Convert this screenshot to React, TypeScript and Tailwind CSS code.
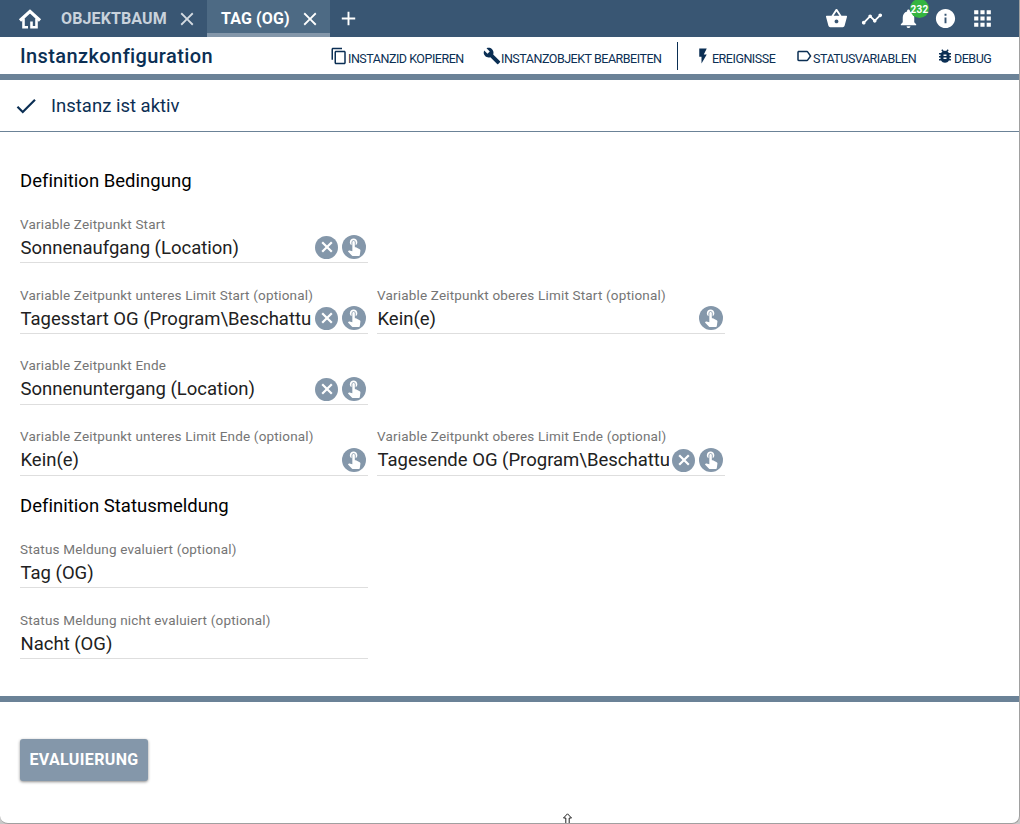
import React from "react";
import { MdAdd, MdApps, MdBugReport, MdBuild, MdCheck, MdClose, MdContentCopy, MdFlashOn, MdInfo, MdLabelOutline, MdNotifications, MdShoppingBasket, MdTimeline, MdTouchApp } from "react-icons/md";

function HomeIcon() {
  return (
    <svg viewBox="0 0 24 20" className="h-5 w-6" fill="none" stroke="white">
      <path d="M2 11.5 12 2.3l10 9.2" strokeWidth="3.2" />
      <path d="M5.5 9.5v8.7H10M18.5 9.5v8.7h-5v-5.7" strokeWidth="2.6" />
    </svg>
  );
}

type FieldProps = { label: string; value: string; clear?: boolean; pick?: boolean; labelClass?: string; valueClass?: string };

function Field({ label, value, clear, pick, labelClass = "pt-0", valueClass = "pt-0.5" }: FieldProps) {
  return (
    <div className="flex h-[71px] w-[348px] shrink-0 flex-col border-b border-[#dedede] pt-6">
      <div className={"h-4 text-[13.5px] leading-4 tracking-[0.175px] whitespace-nowrap text-[#757575] " + labelClass}>{label}</div>
      <div className="flex h-[30px] items-center gap-1 pr-0.5">
        <div className={"h-[30px] min-w-0 flex-1 overflow-hidden pl-[0.5px] text-[18.5px] leading-[29px] whitespace-nowrap text-[#212121] " + valueClass}>{value}</div>
        {clear && (
          <button className="-ml-px flex size-[23px] shrink-0 items-center justify-center rounded-full bg-[#8497aa] text-white">
            <svg viewBox="0 0 12 12" className="size-3" fill="none" stroke="currentColor" strokeWidth="2.2">
              <path d="m1.2 1.2 9.6 9.6m0-9.6-9.6 9.6" />
            </svg>
          </button>
        )}
        {pick && (
          <button className="flex size-6 shrink-0 items-center justify-center rounded-full bg-[#8497aa] text-white">
            <MdTouchApp className="mb-0.5 size-5" />
          </button>
        )}
      </div>
    </div>
  );
}

const actionText = "pt-1 text-[12.5px] leading-4 font-normal tracking-[-0.48px]";

export default function App() {
  return (
    <div className="h-[824px] w-[1020px] overflow-hidden bg-[#c9c9c9] font-['Roboto',sans-serif]">
      <div className="flex h-[824px] w-[1020px] flex-col overflow-hidden rounded-b-[8px] border-r border-b border-[#a0a0a0] bg-white">
        <header className="flex h-[37px] shrink-0 items-center bg-[#395673] text-white">
          <div className="flex w-[61px] pl-[18px]"><HomeIcon /></div>
          <div className="w-[115px] text-[16px] font-bold tracking-[0.12px] whitespace-nowrap text-[#c9d2dc]">OBJEKTBAUM</div>
          <MdClose className="size-[22px] text-[#d4dbe2]" />
          <div className="ml-[9px] flex h-full w-[123px] items-center border-b-4 border-[#8497aa] bg-[#4d6a84] pt-1 pl-[14px]">
            <span className="w-[78px] text-[16px] font-bold tracking-[0.12px] whitespace-nowrap">TAG (OG)</span>
            <MdClose className="size-[22px]" />
          </div>
          <MdAdd className="ml-[7px] size-[23px]" />
          <div className="ml-auto flex items-center">
            <MdShoppingBasket className="mr-[13px] size-[23px]" />
            <MdTimeline className="mr-[14px] size-[22px]" />
            <div className="relative mr-[14px]">
              <MdNotifications className="size-[23px]" />
              <span className="absolute -top-[8px] left-[13px] flex size-[19px] items-center justify-center rounded-full bg-[#35b440] pt-px text-[10px] font-bold tracking-[0.3px]">232</span>
            </div>
            <MdInfo className="mr-[13px] size-[23px]" />
            <MdApps className="mr-[24px] size-[25px]" />
          </div>
        </header>
        <div className="flex h-[43px] shrink-0 items-center border-b-[6px] border-[#6b8297] pl-5 text-[#0b2f54]">
          <h1 className="w-[310px] text-[20px] font-medium tracking-[0.4px] whitespace-nowrap">Instanzkonfiguration</h1>
          <button className="flex w-[153px] pt-[3px] whitespace-nowrap">
            <MdContentCopy className="size-[18px] shrink-0" /><span className={actionText}>INSTANZID KOPIEREN</span>
          </button>
          <button className="flex w-[194px] pt-[3px] whitespace-nowrap">
            <MdBuild className="size-[18px] shrink-0" /><span className={actionText}>INSTANZOBJEKT BEARBEITEN</span>
          </button>
          <div className="h-7 w-px bg-[#0b2f54]" />
          <button className="ml-[16px] flex w-[101px] pt-[3px] whitespace-nowrap">
            <MdFlashOn className="size-[18px] shrink-0" /><span className={actionText}>EREIGNISSE</span>
          </button>
          <button className="flex w-[141px] pt-[3px] whitespace-nowrap">
            <MdLabelOutline className="size-[18px] shrink-0" /><span className={actionText}>STATUSVARIABLEN</span>
          </button>
          <button className="flex pt-[3px] whitespace-nowrap">
            <MdBugReport className="size-[18px] shrink-0" /><span className={actionText}>DEBUG</span>
          </button>
        </div>
        <div className="flex h-[52px] shrink-0 items-center border-b border-[#6b8297] pl-[13px] text-[#0b2f54]">
          <MdCheck className="size-[26px]" />
          <span className="ml-[12px] pt-0.5 text-[18.5px]">Instanz ist aktiv</span>
        </div>
        <main className="flex h-[570px] shrink-0 flex-col border-b-[6px] border-[#6b8297] pt-[37px] pl-5">
          <h2 className="h-[23px] pt-px text-[18.5px] leading-[23px] tracking-[0.02px] text-black">Definition Bedingung</h2>
          <Field label="Variable Zeitpunkt Start" value="Sonnenaufgang (Location)" clear pick />
          <div className="flex gap-[9px]">
            <Field label="Variable Zeitpunkt unteres Limit Start (optional)" value="Tagesstart OG (Program\Beschattung)" clear pick />
            <Field label="Variable Zeitpunkt oberes Limit Start (optional)" value="Kein(e)" pick />
          </div>
          <Field label="Variable Zeitpunkt Ende" value="Sonnenuntergang (Location)" clear pick labelClass="-mt-px mb-px" valueClass="pt-px" />
          <div className="flex gap-[9px]">
            <Field label="Variable Zeitpunkt unteres Limit Ende (optional)" value="Kein(e)" pick labelClass="-mt-px mb-px" valueClass="pt-px" />
            <Field label="Variable Zeitpunkt oberes Limit Ende (optional)" value="Tagesende OG (Program\Beschattung)" clear pick labelClass="-mt-px mb-px" valueClass="pt-px" />
          </div>
          <h2 className="h-[41px] pt-[19px] text-[18.5px] leading-[23px] tracking-[0.02px] text-black">Definition Statusmeldung</h2>
          <Field label="Status Meldung evaluiert (optional)" value="Tag (OG)" />
          <Field label="Status Meldung nicht evaluiert (optional)" value="Nacht (OG)" />
        </main>
        <footer className="relative flex-1 px-5 pt-[37px]">
          <button className="flex h-[42px] w-[128px] items-center justify-center rounded-[3px] bg-[#8497aa] text-[16px] font-bold tracking-[0.36px] whitespace-nowrap text-white shadow-[0_1px_3px_rgba(0,0,0,0.45)]">EVALUIERUNG</button>
          <svg className="absolute bottom-0 left-[562px] h-[10px] w-[11px]" viewBox="0 0 11 10" fill="white" stroke="#222"><path d="M5.5.8 1.5 5h2.3v6h3.4V5h2.3z" /></svg>
        </footer>
      </div>
    </div>
  );
}
